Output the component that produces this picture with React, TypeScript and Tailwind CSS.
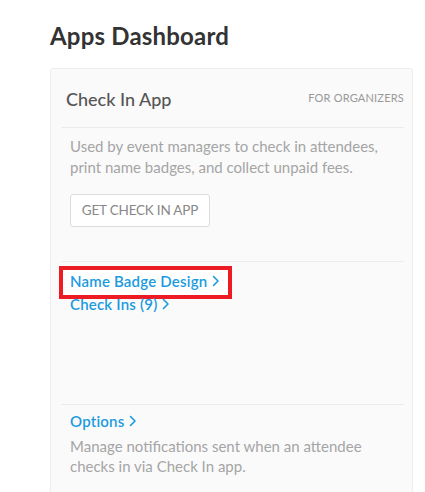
import React from 'react';

const Chevron: React.FC = () => (
  <svg width="8" height="12" viewBox="0 0 8 12" className="ml-[5px] inline-block" fill="none">
    <path d="M1.5 1.5 L6 6 L1.5 10.5" stroke="currentColor" strokeWidth="1.6" strokeLinecap="round" strokeLinejoin="round" />
  </svg>
);

const LinkRow: React.FC<{ label: string }> = ({ label }) => (
  <a href="#" className="flex items-center h-[22px] text-[15px] font-semibold tracking-[0.2px] text-[#1a9be0]">
    {label}
    <Chevron />
  </a>
);

const App: React.FC = () => {
  return (
    <div className="h-[492px] bg-white pl-[50px] pt-[20px] font-['Lato',sans-serif] overflow-hidden">
      <h1 className="text-[24px] leading-[32px] font-bold text-[#333] tracking-[0.2px] mb-[16px]">
        Apps Dashboard
      </h1>

      <div className="w-[363px] bg-[#fafafa] border border-[#eeeeee] rounded-[3px] pl-[10px] pr-[8px] pb-[40px]">
        {/* header */}
        <div className="flex items-start justify-between pl-[5px] pt-[18px] pb-[16px] border-b border-[#ececec]">
          <h2 className="text-[18px] leading-[24px] font-medium text-[#555]">Check In App</h2>
          <span className="text-[11px] leading-[16px] text-[#999] mt-[3px] tracking-[0.2px]">FOR ORGANIZERS</span>
        </div>

        {/* description + button */}
        <div className="pl-[9px] pt-[8px] pb-[34px] border-b border-[#ececec]">
          <p className="text-[15px] leading-[21px] text-[#a5a5a5]">
            Used by event managers to check in attendees,
            <br />
            print name badges, and collect unpaid fees.
          </p>
          <button className="mt-[16px] w-[140px] h-[33px] bg-white border border-[#dcdcdc] rounded-[3px] text-[13.5px] text-[#888] tracking-[-0.2px]">
            GET CHECK IN APP
          </button>
        </div>

        {/* links */}
        <div className="pl-[9px] pt-[7px] pb-[89px] border-b border-[#ececec]">
          <div className="inline-flex -ml-[11px] -mt-[4px] -mb-[7px] border-4 border-[#ed1c24] bg-white pl-[7px] pr-[8px] pb-[3px]">
            <LinkRow label="Name Badge Design" />
          </div>
          <LinkRow label="Check Ins (9)" />
        </div>

        {/* options */}
        <div className="pl-[9px] pt-[5px]">
          <LinkRow label="Options" />
          <p className="mt-[4px] text-[15px] leading-[20px] text-[#a5a5a5]">
            Manage notifications sent when an attendee
            <br />
            checks in via Check In app.
          </p>
        </div>
      </div>
    </div>
  );
};

export default App;
